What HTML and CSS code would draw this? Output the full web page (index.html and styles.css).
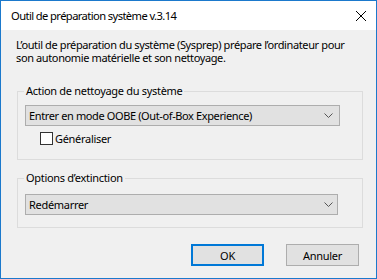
FILE: index.html
```html
<!DOCTYPE html>
<html lang="fr">
<head>
<meta charset="utf-8">
<title>Sysprep</title>
<link rel="stylesheet" href="styles.css">
</head>
<body>
<div class="window">
  <div class="titlebar">
    <span class="title">Outil de préparation système v.3.14</span>
    <svg class="close" width="12" height="12" viewBox="0 0 12 12"><path d="M1 1 L11 11 M11 1 L1 11" stroke="#000" stroke-width="1" fill="none"/></svg>
  </div>
  <div class="content">
    <p class="desc">L’outil de préparation du système (Sysprep) prépare l’ordinateur pour<br>son autonomie matérielle et son nettoyage.</p>
    <fieldset class="group group-action">
      <legend>Action de nettoyage du système</legend>
      <div class="combo combo-wide">
        <span>Entrer en mode OOBE (Out-of-Box Experience)</span>
        <svg class="chev" width="9" height="5" viewBox="0 0 9 5"><path d="M0.5 0.5 L4.5 4.5 L8.5 0.5" stroke="#555" stroke-width="1" fill="none"/></svg>
      </div>
      <label class="check"><span class="box"></span><span>Généraliser</span></label>
    </fieldset>
    <fieldset class="group group-shutdown">
      <legend>Options d’extinction</legend>
      <div class="combo combo-narrow">
        <span>Redémarrer</span>
        <svg class="chev" width="9" height="5" viewBox="0 0 9 5"><path d="M0.5 0.5 L4.5 4.5 L8.5 0.5" stroke="#555" stroke-width="1" fill="none"/></svg>
      </div>
    </fieldset>
    <div class="buttons">
      <button class="btn btn-default">OK</button>
      <button class="btn">Annuler</button>
    </div>
  </div>
</div>
</body>
</html>
```
FILE: styles.css
```css
html, body {
  margin: 0;
  padding: 0;
  background: #f0f0f0;
}
.window {
  width: 377px;
  height: 279px;
  box-sizing: border-box;
  border: 1px solid #1b79cc;
  background: #f0f0f0;
  font-family: "Noto Sans", "Open Sans", sans-serif;
  font-size: 11px;
  letter-spacing: -0.3px;
  color: #000;
  display: flex;
  flex-direction: column;
}
.titlebar {
  height: 29px;
  background: #fff;
  display: flex;
  align-items: center;
  justify-content: space-between;
  padding: 0 9px 0 10px;
}
.title {
  font-size: 11.2px;
  letter-spacing: -0.6px;
  line-height: 15px;
}
.close {
  display: block;
}
.content {
  flex: 1;
  padding: 8px 13px 0 16px;
  display: flex;
  flex-direction: column;
}
.desc {
  margin: 0 0 0 -1px;
  line-height: 13px;
  white-space: nowrap;
  letter-spacing: -0.38px;
}
.group {
  margin: 20px 0 0 0;
  border: 1px solid #dcdcdc;
  padding: 7px 7px 13px 7px;
  min-width: 0;
}
.group legend {
  padding: 0 2px;
  margin-left: -1px;
  line-height: 14px;
}
.group-shutdown {
  margin-top: 11px;
  padding-top: 9px;
  padding-bottom: 12px;
}
.combo {
  height: 21px;
  box-sizing: border-box;
  border: 1px solid #adadad;
  background: #e1e1e1;
  display: flex;
  align-items: center;
  justify-content: space-between;
  padding: 0 6px 0 3px;
}
.combo-wide { width: 315px; letter-spacing: -0.38px; }
.combo-narrow { width: 313px; padding-right: 4px; }
.chev { display: block; }
.check {
  display: flex;
  align-items: center;
  gap: 2px;
  margin: 5px 0 0 15px;
  height: 15px;
}
.box {
  width: 13px;
  height: 13px;
  box-sizing: border-box;
  border: 1px solid #333;
  background: #fff;
}
.buttons {
  display: flex;
  justify-content: flex-end;
  gap: 22px;
  margin: 16px 4px 0 0;
}
.btn {
  width: 73px;
  height: 22px;
  box-sizing: border-box;
  border: 1px solid #adadad;
  background: #e1e1e1;
  font-family: inherit;
  font-size: 11px;
  letter-spacing: inherit;
  color: #000;
  padding: 0;
}
.btn-default {
  border: 2px solid #0078d7;
}
```
